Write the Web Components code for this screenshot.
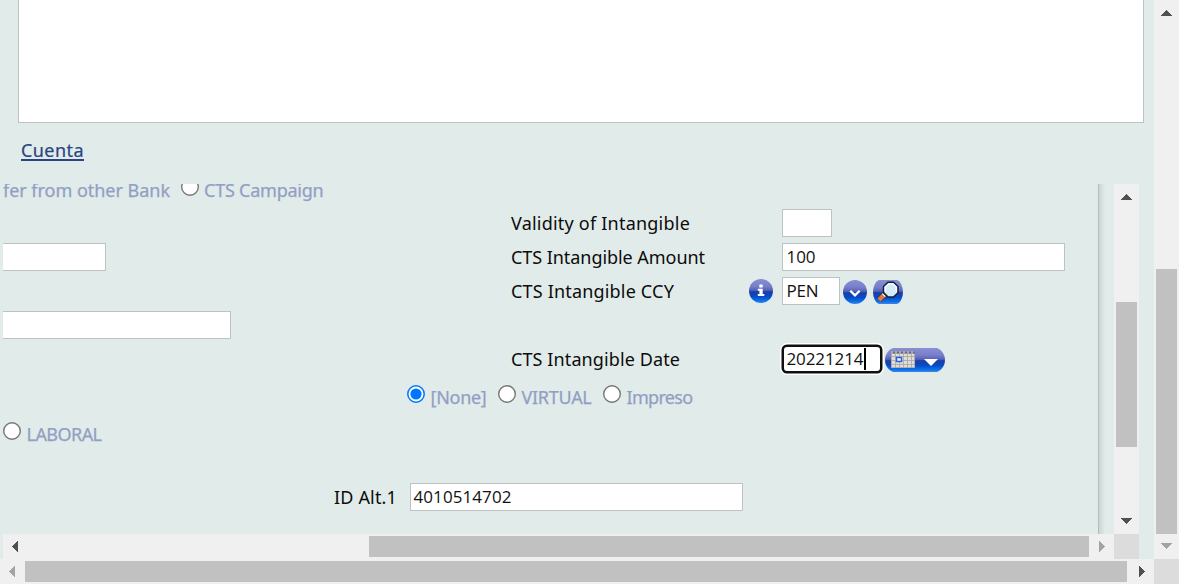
<!DOCTYPE html>
<html lang="es"><head><meta charset="utf-8"><title>Cuenta</title>
<style>html,body{margin:0;height:584px;overflow:hidden;background:#e1ebe9}</style></head><body>
<account-window></account-window>
<script>
const define=(name,html,setup)=>customElements.define(name,class extends HTMLElement{
  connectedCallback(){ if(this.shadowRoot)return; this.attachShadow({mode:'open'}).innerHTML=typeof html==='function'?html(this):html; if(setup)setup(this); }
});
// Label whose tracking is adjusted so that it occupies the given width.
define('fit-text',`<style>:host{display:inline-block;white-space:pre;font:18px/28px "Noto Sans","Open Sans",sans-serif;color:#0c0c0c}:host([muted]){color:#929fc4;-webkit-text-stroke:.25px #929fc4}:host([link]){color:#2a4480;-webkit-text-stroke:.2px #2a4480}:host([link]) span{text-decoration:underline;text-decoration-thickness:2px;text-underline-offset:2px;text-decoration-skip-ink:none}:host([value]){font:17px/26px "Open Sans","Noto Sans",sans-serif;color:#111}</style><span><slot></slot></span>`,el=>{
  const w=+el.getAttribute('w'), s=el.shadowRoot.querySelector('span'), n=el.textContent.length;
  s.style.letterSpacing=((w-s.getBoundingClientRect().width)/n)+'px';
});
define('text-box',el=>`<style>:host{display:block;box-sizing:border-box;height:28px;width:${el.getAttribute('w')}px;background:#fff;border:1px solid #bfc2c2;padding-left:3.5px;overflow:hidden}:host([cut]){border-left:0}:host([focused]){border:2px solid #101010;border-radius:5px;box-shadow:0 0 0 .5px #101010,0 0 0 2px #fff;padding-left:2.5px;display:flex;align-items:center}i{width:2px;height:22px;background:#000;flex:none}</style><slot></slot>${el.hasAttribute('focused')?'<i></i>':''}`);
define('radio-dot',el=>`<style>:host{display:block;width:18px;height:18px;flex:none}svg{display:block}</style><svg width="18" height="18">${el.hasAttribute('checked')?'<circle cx="9" cy="9" r="8.2" fill="#fff" stroke="#0075ff" stroke-width="1.5"/><circle cx="9" cy="9" r="5.6" fill="#0075ff"/>':'<circle cx="9" cy="9" r="8.3" fill="#fff" stroke="#767676" stroke-width="1.4"/>'}</svg>`);
const grad='<defs><linearGradient id="g" x2="0" y2="1"><stop stop-color="#8b8fd2"/><stop offset=".3" stop-color="#777fca"/><stop offset=".47" stop-color="#5362b8"/><stop offset=".53" stop-color="#1c3ea5"/><stop offset=".72" stop-color="#0849c4"/><stop offset=".9" stop-color="#0873ee"/><stop offset="1" stop-color="#4b82d8"/></linearGradient></defs>';
const art={
 info:[24,'<circle cx="12" cy="12" r="12" fill="url(#g)"/><path d="M10.3 5.5h3.4v3h-3.4zM8.8 9.8h4.9V15h1.6v2H8.8v-2h1.6v-3.2H8.8z" fill="#fff"/>'],
 drop:[24,'<circle cx="12" cy="12" r="12" fill="url(#g)"/><path d="M7.3 10.7l4.7 4.6 4.7-4.6" fill="none" stroke="#fff" stroke-width="2.3"/>'],
 search:[30,'<path d="M6 0h18q3 1 4.500 5 1.500 3 1.500 7t-1.500 7q-1.500 4-4.500 5H6q-3-1-4.500-5Q0 16 0 12t1.500-7Q3 1 6 0z" fill="url(#g)"/><path d="M11.500 14.500L6 20" stroke="#5b3228" stroke-width="6"/><path d="M11 15L6 20" stroke="#d77b48" stroke-width="4.400"/><path d="M9.500 13.500l3 3" stroke="#eee" stroke-width="1.700"/><path d="M15 2.200h5.500l4.500 4.300v6.300L20.500 17H15l-4.500-4.300V6.500z" fill="#d4eafb" stroke="#172238" stroke-width="1.600"/><path d="M12.300 11.500V7.300L15.700 4H20l3.300 3.300v4.200" fill="none" stroke="#f5fbff" stroke-width="1.500"/>'],
 calendar:[60,'<path d="M8 0h44q5 2 7 7 2 5 0 10-2 5-7 7H8q-5-2-7-7-2-5 0-10 2-5 7-7z" fill="url(#g)"/><rect x="6" y="3" width="24" height="17" fill="#deddd9"/><rect x="6" y="3" width="24" height="3" fill="#aaa9ad"/><path d="M8 4.500h22" stroke="#686b78" stroke-width="2" stroke-dasharray="2 2"/><path d="M6 8.500h24M6 12.500h24M6 16.500h24M6 19.500h24M6.500 6v14M10.500 6v14M14.500 6v14M18.500 6v14M22.500 6v14M26.500 6v14M29.500 6v14" stroke="#aaa9a9" stroke-width=".9"/><rect x="11.500" y="9.500" width="5" height="4" fill="#e7eeff" stroke="#285de2" stroke-width="1.400"/><path d="M39 11h14l-7 7z" fill="#fff"/>']};
define('tool-icon',el=>{const a=art[el.getAttribute('kind')];return `<style>:host{display:block;flex:none}svg{display:block}</style><svg width="${a[0]}" height="24">${grad}${a[1]}</svg>`});
// Track with two arrow buttons; start and size place the thumb along it.
define('scroll-bar',el=>{
 const v=el.hasAttribute('vertical'),s=el.getAttribute('start'),z=el.getAttribute('size'),off=el.getAttribute('off');
 const c=k=>off===k?'#a3a3a3':'#505050';
 const a=v?`<path d="M7 16l5.5-6 5.500 6z" fill="${c('a')}"/>`:`<path d="M15 7l-6 5.500 6 5.500z" fill="${c('a')}"/>`;
 const b=v?`<path d="M7 9l5.500 6 5.500-6z" fill="${c('b')}"/>`:`<path d="M10 7l6 5.500-6 5.500z" fill="${c('b')}"/>`;
 return `<style>:host{display:grid;background:#f0f0f0;${v?`grid-template-rows:${s}px ${z}px 1fr`:`grid-template-columns:${s}px ${z}px 1fr`}}svg{display:block;width:25px;height:25px;shape-rendering:crispEdges}.t{background:#c1c1c1;margin:${v?'0 2px':'2px 0'}}svg:last-child{${v?'align-self:end':'justify-self:end'}}</style><svg>${a}</svg><div class="t"></div><svg>${b}</svg>`});
define('radio-row',`<style>:host{display:flex}</style><slot></slot>`);
define('account-form',`<style>
:host{display:block;overflow:hidden;height:350px;position:relative}
.rule{position:absolute;right:0;top:0;width:16px;height:100%;box-sizing:border-box;border-left:1px solid #b7bcbc;background:linear-gradient(90deg,#ccd5d4,#e1ebe9 6px)}
.top{height:25px;align-items:flex-start}.top radio-dot{margin:-6px 5px 0 11px}.top fit-text{margin-top:-8px}
.grid{display:grid;grid-template-columns:508px 235px 36px auto;grid-auto-rows:28px;row-gap:6px;justify-content:start}
.tools{display:flex;align-items:center}.tools tool-icon{margin-top:2px}
.options{height:28px;margin:10px 0 0 404px}.options fit-text{margin:0 11.5px 0 5.5px}.options radio-dot,.lab radio-dot{margin-top:2px}
.options fit-text:last-child{margin-right:0}
.lab{margin-top:9px;height:28px}.lab fit-text{margin-left:5.5px}
.id{display:flex;margin:35px 0 0 331px}.id text-box{margin-left:13px}.id fit-text{width:63px}
</style>
<radio-row class="top"><fit-text muted w="167">fer from other Bank</fit-text><radio-dot></radio-dot><fit-text muted w="119.500">CTS Campaign</fit-text></radio-row>
<div class="grid">
<span></span><fit-text w="179">Validity of Intangible</fit-text><span></span><text-box w="50"></text-box>
<text-box cut w="103"></text-box><fit-text w="194">CTS Intangible Amount</fit-text><span></span><text-box w="283"><fit-text value w="29">100</fit-text></text-box>
<span></span><fit-text w="163">CTS Intangible CCY</fit-text><tool-icon kind="info" style="padding:2px 0 0 3px"></tool-icon><div class="tools"><text-box w="58"><fit-text value w="32">PEN</fit-text></text-box><tool-icon kind="drop" style="margin-left:3px"></tool-icon><tool-icon kind="search" style="margin-left:6px"></tool-icon></div>
<text-box cut w="228"></text-box><span></span><span></span><span></span>
<span></span><fit-text w="169">CTS Intangible Date</fit-text><span></span><div class="tools"><text-box focused w="100"><fit-text value w="77">20221214</fit-text></text-box><tool-icon kind="calendar" style="margin-left:3px"></tool-icon></div>
</div>
<radio-row class="options"><radio-dot checked></radio-dot><fit-text muted w="56">[None]</fit-text><radio-dot></radio-dot><fit-text muted w="70">VIRTUAL</fit-text><radio-dot></radio-dot><fit-text muted w="66">Impreso</fit-text></radio-row>
<radio-row class="lab"><radio-dot></radio-dot><fit-text muted w="75">LABORAL</fit-text></radio-row>
<div class="id"><fit-text w="63">ID Alt.1</fit-text><text-box w="333" style="padding-left:2.500px"><fit-text value w="98">4010514702</fit-text></text-box></div>
<div class="rule"></div>`);
define('account-window',`<style>
:host{display:grid;grid-template:559px 25px / 1154px 25px;width:1179px;height:584px;background:#e1ebe9}
main{display:grid;grid-template-rows:123px 61px 375px;min-width:0}
.panel{background:#fff;border:1px solid #bfc2c2;border-top:0;margin:0 10px 0 18px}
.link{padding:13px 0 0 21px}
.pane{display:grid;grid-template:350px 25px / 1111px 25px;margin-left:3px}
.corner{background:#dcdcdc}
</style><main><div class="panel"></div><div class="link"><fit-text link w="63">Cuenta</fit-text></div><div class="pane"><account-form></account-form><scroll-bar vertical start="118" size="145"></scroll-bar><scroll-bar start="366" size="720" off="b"></scroll-bar><div class="corner"></div></div></main>
<scroll-bar vertical start="269" size="265" off="b"></scroll-bar><scroll-bar start="25" size="1102" off="a"></scroll-bar><div class="corner"></div>`);
</script></body></html>
